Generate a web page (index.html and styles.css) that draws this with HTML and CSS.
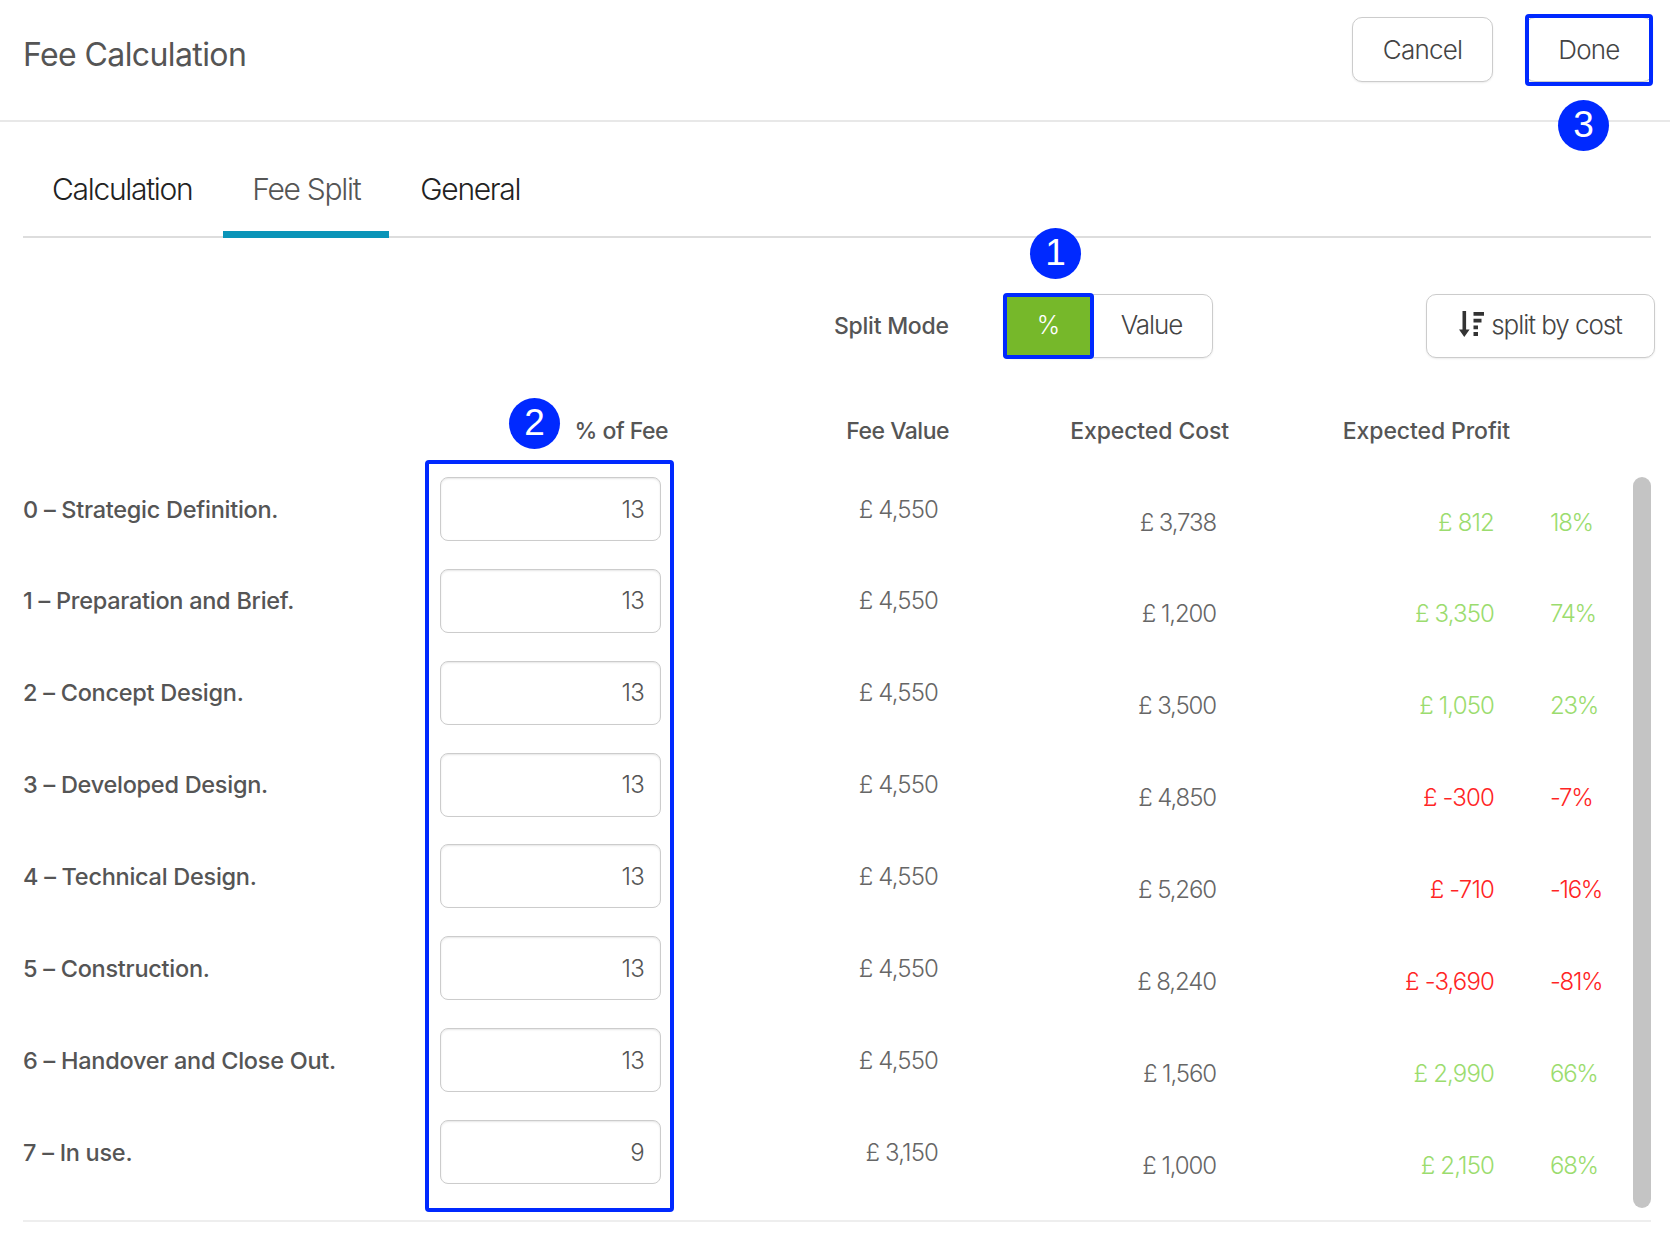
FILE: index.html
```html
<!DOCTYPE html>
<html lang="en">
<head>
<meta charset="utf-8">
<title>Fee Calculation</title>
<link rel="stylesheet" href="styles.css">
</head>
<body>
<div class="page">
  <header class="top">
    <h1 class="title">Fee Calculation</h1>
    <div class="actions">
      <button class="btn btn-cancel">Cancel</button>
      <button class="btn btn-done">Done</button>
    </div>
  </header>

  <main class="content">
    <nav class="tabs">
      <a class="tab">Calculation</a>
      <a class="tab active">Fee Split</a>
      <a class="tab">General</a>
    </nav>

    <div class="mode-row">
      <span class="mode-label">Split Mode</span>
      <div class="toggle">
        <span class="toggle-on">%</span>
        <span class="toggle-off">Value</span>
      </div>
      <button class="btn btn-split">
        <svg class="sort-icon" width="26" height="27" viewBox="0 0 26 27"><path d="M3.500 0h3.600v18.500h3.500L5.300 26 0 18.500h3.500z" fill="#333"/><path d="M14.500 1h10.500v3.800H14.500zM14.500 7.700h8v3.800h-8zM14.500 14.400h4.500v3.800h-4.500zM14.500 21.100h4.500v3.800h-4.500z" fill="#333"/></svg>
        <span>split by cost</span>
      </button>
    </div>

    <div class="head-row">
      <span class="hd">% of Fee</span>
      <span class="hd">Fee Value</span>
      <span class="hd hd-wide">Expected Cost</span>
      <span class="hd hd-wide">Expected Profit</span>
    </div>

    <div class="table-wrap">
      <div class="rows">
        <div class="row"><span class="label">0 – Strategic Definition.</span><input class="pct-input" value="13"><span class="value">£ 4,550</span><span class="cost">£ 3,738</span><span class="profit pos">£ 812</span><span class="margin pos">18%</span></div>
        <div class="row"><span class="label">1 – Preparation and Brief.</span><input class="pct-input" value="13"><span class="value">£ 4,550</span><span class="cost">£ 1,200</span><span class="profit pos">£ 3,350</span><span class="margin pos">74%</span></div>
        <div class="row"><span class="label">2 – Concept Design.</span><input class="pct-input" value="13"><span class="value">£ 4,550</span><span class="cost">£ 3,500</span><span class="profit pos">£ 1,050</span><span class="margin pos">23%</span></div>
        <div class="row"><span class="label">3 – Developed Design.</span><input class="pct-input" value="13"><span class="value">£ 4,550</span><span class="cost">£ 4,850</span><span class="profit neg">£ -300</span><span class="margin neg">-7%</span></div>
        <div class="row"><span class="label">4 – Technical Design.</span><input class="pct-input" value="13"><span class="value">£ 4,550</span><span class="cost">£ 5,260</span><span class="profit neg">£ -710</span><span class="margin neg">-16%</span></div>
        <div class="row"><span class="label">5 – Construction.</span><input class="pct-input" value="13"><span class="value">£ 4,550</span><span class="cost">£ 8,240</span><span class="profit neg">£ -3,690</span><span class="margin neg">-81%</span></div>
        <div class="row"><span class="label">6 – Handover and Close Out.</span><input class="pct-input" value="13"><span class="value">£ 4,550</span><span class="cost">£ 1,560</span><span class="profit pos">£ 2,990</span><span class="margin pos">66%</span></div>
        <div class="row"><span class="label">7 – In use.</span><input class="pct-input" value="9"><span class="value">£ 3,150</span><span class="cost">£ 1,000</span><span class="profit pos">£ 2,150</span><span class="margin pos">68%</span></div>
      </div>
      <div class="scrollbar"></div>
    </div>
  </main>

  <div class="mark mark-toggle"></div>
  <div class="mark mark-inputs"></div>
  <div class="mark mark-done"></div>
  <span class="badge badge-1">1</span>
  <span class="badge badge-2">2</span>
  <span class="badge badge-3">3</span>
</div>
</body>
</html>
```

FILE: styles.css
```css
* { box-sizing: border-box; }
html, body { margin: 0; padding: 0; background: #fff; }
body { font-family: Inter, "Open Sans", sans-serif; color: #555; }
.page { position: relative; width: 1670px; height: 1258px; overflow: hidden; }

.top {
  display: flex; justify-content: space-between; align-items: flex-start;
  height: 122px; padding: 17px 17px 0 23px;
  border-bottom: 2px solid #e8e8e8;
}
.title { margin: 18px 0 0; font-size: 32px; line-height: 40px; font-weight: 400; color: #555; letter-spacing: -0.6px; }
.actions { display: flex; gap: 32px; }
.btn {
  font-family: inherit; font-size: 26px; font-weight: 300; color: #444; letter-spacing: -0.8px;
  background: #fff; border: 1px solid #ccc; border-radius: 10px;
  box-shadow: 0 1px 2px rgba(0,0,0,.08);
}
.btn-cancel { width: 141px; height: 65px; }
.btn-done { width: 128px; height: 65px; }

.content { padding: 0 19px 0 23px; }
.tabs { display: flex; gap: 2px; height: 116px; align-items: flex-end; border-bottom: 2px solid #ddd; }
.tab {
  padding: 0 29px; height: 80px; line-height: 62px; margin-bottom: -2px;
  font-size: 30px; font-weight: 300; color: #222; letter-spacing: -1.3px;
}
.tab.active { color: #555; border-bottom: 7px solid #0a94b8; }

.mode-row { display: flex; align-items: center; height: 64px; margin-top: 56px; }
.mode-label { flex: none; margin-left: 811px; width: 115px; font-size: 23px; font-weight: 500; letter-spacing: -0.25px; white-space: nowrap; }
.toggle {
  display: flex; flex: none; margin-left: 54px; width: 210px; height: 64px;
  border: 1px solid #ccc; border-radius: 10px; box-shadow: 0 1px 2px rgba(0,0,0,.08);
}
.toggle-on { width: 91px; margin: -1px 0 -1px -1px; background: #76b82a; color: #fff; font-size: 25px; font-weight: 300; text-align: center; line-height: 62px; border-radius: 4px; }
.toggle-off { flex: 1; padding-right: 3px; text-align: center; font-size: 26px; font-weight: 300; line-height: 60px; color: #444; letter-spacing: -1.1px; }
.btn-split {
  display: flex; flex: none; align-items: center; justify-content: center; gap: 6px;
  margin-left: 213px; width: 229px; height: 64px; padding: 0 0 3px;
  white-space: nowrap; letter-spacing: -1.05px;
}
.sort-icon { flex: none; }

.head-row { display: grid; grid-template-columns: 645px 281px 280px 281px; height: 40px; margin-top: 53px; }
.hd { text-align: right; font-size: 23px; line-height: 40px; font-weight: 500; letter-spacing: -0.5px; white-space: nowrap; }
.hd-wide { letter-spacing: -0.1px; }

.table-wrap {
  display: flex; justify-content: space-between; margin-top: 26px; padding-bottom: 8px;
  border-bottom: 2px solid #eee;
}
.rows { width: 1610px; }
.row {
  display: grid; grid-template-columns: 417px 221px 277px 278px 278px 1fr;
  align-items: center; height: 64px; margin-bottom: 27.860px;
  font-size: 24px; font-weight: 300; letter-spacing: -0.85px;
}
.label { font-size: 23.500px; font-weight: 500; letter-spacing: -0.27px; color: #555; white-space: nowrap; }
.pct-input {
  width: 221px; height: 64px; padding: 0 16px; text-align: right;
  font-family: inherit; font-size: 24px; font-weight: 300; color: #555; letter-spacing: -0.8px;
  background: #fff; border: 1px solid #ccc; border-radius: 8px;
  box-shadow: inset 0 1px 2px rgba(0,0,0,.1); outline: none;
}
.value { text-align: right; color: #666; }
.cost { text-align: right; color: #666; padding-top: 26px; letter-spacing: -1.1px; }
.profit { text-align: right; padding-top: 26px; }
.margin { padding: 26px 0 0 56px; letter-spacing: -1.3px; }
.pos { color: #9bdc6e; }
.neg { color: #ff2424; }
.scrollbar { width: 18px; height: 731px; background: #c4c4c4; border-radius: 9px; }

.mark { position: absolute; border: 4px solid #0029ff; border-radius: 4px; }
.mark-toggle { left: 1003px; top: 293px; width: 91px; height: 66px; }
.mark-inputs { left: 425px; top: 460px; width: 249px; height: 752px; }
.mark-done { left: 1525px; top: 14px; width: 128px; height: 72px; }
.badge {
  position: absolute; width: 51px; height: 51px; border-radius: 50%;
  background: #0029ff; color: #fff; text-align: center;
  font-family: "Liberation Sans", Arial, sans-serif; font-size: 37px; line-height: 49px;
}
.badge-1 { left: 1030px; top: 228px; }
.badge-2 { left: 509px; top: 398px; }
.badge-3 { left: 1558px; top: 100px; }
```
